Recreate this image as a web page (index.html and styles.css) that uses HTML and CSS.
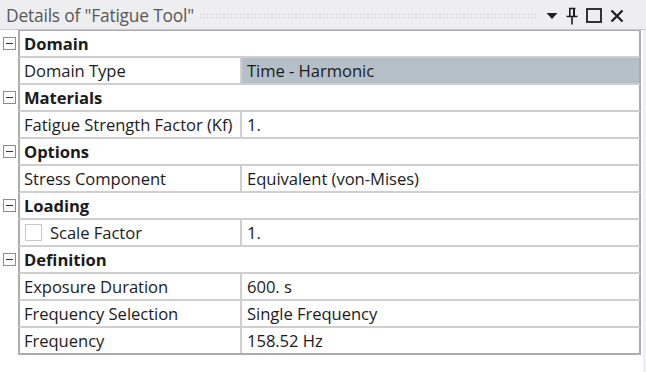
FILE: index.html
```html
<!DOCTYPE html>
<html>
<head>
<meta charset="utf-8">
<link rel="stylesheet" href="styles.css">
</head>
<body>
<div class="panel">
  <div class="titlebar">
    <span class="title">Details of "Fatigue Tool"</span>
    <span class="grip"></span>
    <span class="tools">
      <svg class="ico" width="12" height="8" viewBox="0 0 12 8"><path d="M0.5 1h11l-5.5 6z" fill="#1e1e1e"/></svg>
      <svg class="ico" width="12" height="18" viewBox="0 0 12 18"><path d="M3 1.5h6.5M3.8 1.5v7.5M8.2 1.5v7.5M0.5 9.5h11M6 9.5v8" stroke="#1e1e1e" stroke-width="1.6" fill="none"/><rect x="7" y="1.5" width="2" height="7.5" fill="#1e1e1e"/></svg>
      <svg class="ico" width="16" height="15" viewBox="0 0 16 15"><rect x="1" y="1" width="14" height="13" stroke="#1e1e1e" stroke-width="1.8" fill="none"/></svg>
      <svg class="ico" width="14" height="14" viewBox="0 0 14 14"><path d="M1.5 1.5l11 11M12.5 1.5l-11 11" stroke="#1e1e1e" stroke-width="2.3" fill="none"/></svg>
    </span>
  </div>
  <div class="body">
    <div class="grid">
      <div class="group"><span class="toggle"></span><div class="cell head">Domain</div></div>
      <div class="row"><div class="cell lbl">Domain Type</div><div class="cell val sel">Time - Harmonic</div></div>
      <div class="group"><span class="toggle"></span><div class="cell head">Materials</div></div>
      <div class="row"><div class="cell lbl">Fatigue Strength Factor (Kf)</div><div class="cell val">1.</div></div>
      <div class="group"><span class="toggle"></span><div class="cell head">Options</div></div>
      <div class="row"><div class="cell lbl">Stress Component</div><div class="cell val">Equivalent (von-Mises)</div></div>
      <div class="group"><span class="toggle"></span><div class="cell head">Loading</div></div>
      <div class="row"><div class="cell lbl"><span class="check"></span>Scale Factor</div><div class="cell val">1.</div></div>
      <div class="group"><span class="toggle"></span><div class="cell head">Definition</div></div>
      <div class="row"><div class="cell lbl">Exposure Duration</div><div class="cell val">600. s</div></div>
      <div class="row"><div class="cell lbl">Frequency Selection</div><div class="cell val">Single Frequency</div></div>
      <div class="row last"><div class="cell lbl">Frequency</div><div class="cell val">158.52 Hz</div></div>
    </div>
    <div class="scroll"></div>
  </div>
</div>
</body>
</html>
```
FILE: styles.css
```css
html, body {
  margin: 0;
  padding: 0;
  background: #ffffff;
}
.panel {
  width: 646px;
  height: 372px;
  font-family: "Open Sans", "Liberation Sans", sans-serif;
  color: #1b1b1b;
  display: flex;
  flex-direction: column;
}
.titlebar {
  height: 30px;
  box-sizing: border-box;
  background: #eeeef0;
  border-bottom: 1px solid #c9c9cc;
  display: flex;
  align-items: center;
  padding: 0 6px 0 6px;
}
.title {
  font-size: 17.4px;
  color: #585858;
  white-space: nowrap;
  letter-spacing: -0.2px;
}
.grip {
  flex: 1;
  height: 5px;
  margin: 2px 10px 0 6px;
  background-image: radial-gradient(circle, #c4c4c8 0.7px, transparent 0.8px);
  background-size: 3px 3px;
}
.tools {
  display: flex;
  align-items: center;
  gap: 8px;
  margin-right: 16px;
  padding-top: 2px;
}
.ico { display: block; }
.body {
  flex: 1;
  display: flex;
}
.grid {
  flex: 1;
  display: flex;
  flex-direction: column;
  padding-left: 18px;
  margin-right: 2px;
  align-self: flex-start;
  width: 623px;
}
.group, .row {
  height: 27px;
  box-sizing: border-box;
  display: flex;
  border-left: 2px solid #acacac;
  border-right: 2px solid #acacac;
  border-bottom: 2px solid #cfcfcf;
  position: relative;
}
.group:first-child { border-top: 1px solid #acacac; height: 28px; }
.row.last { border-bottom: 2px solid #acacac; }
.cell {
  display: flex;
  align-items: center;
  font-size: 16.6px;
  padding-left: 4px;
  white-space: nowrap;
  letter-spacing: -0.05px;
}
.head {
  font-weight: 700;
  flex: 1;
}
.lbl {
  width: 222px;
  box-sizing: border-box;
  border-right: 2px solid #cfcfcf;
  flex: none;
}
.val {
  flex: 1;
  padding-left: 5px;
}
.sel {
  background: #b5bfc8;
}
.toggle {
  position: absolute;
  left: -17px;
  top: 6px;
  width: 11px;
  height: 11px;
  border: 1px solid #8c8c8c;
  background: #fdfdfd;
}
.toggle::after {
  content: "";
  position: absolute;
  left: 2px;
  top: 5px;
  width: 7px;
  height: 1px;
  background: #333;
}
.check {
  width: 15px;
  height: 15px;
  border: 1px solid #c8c8c8;
  margin: 0 8px 0 1px;
  background: #fff;
}
.scroll {
  width: 3px;
  background: #f0f0f2;
}
```
